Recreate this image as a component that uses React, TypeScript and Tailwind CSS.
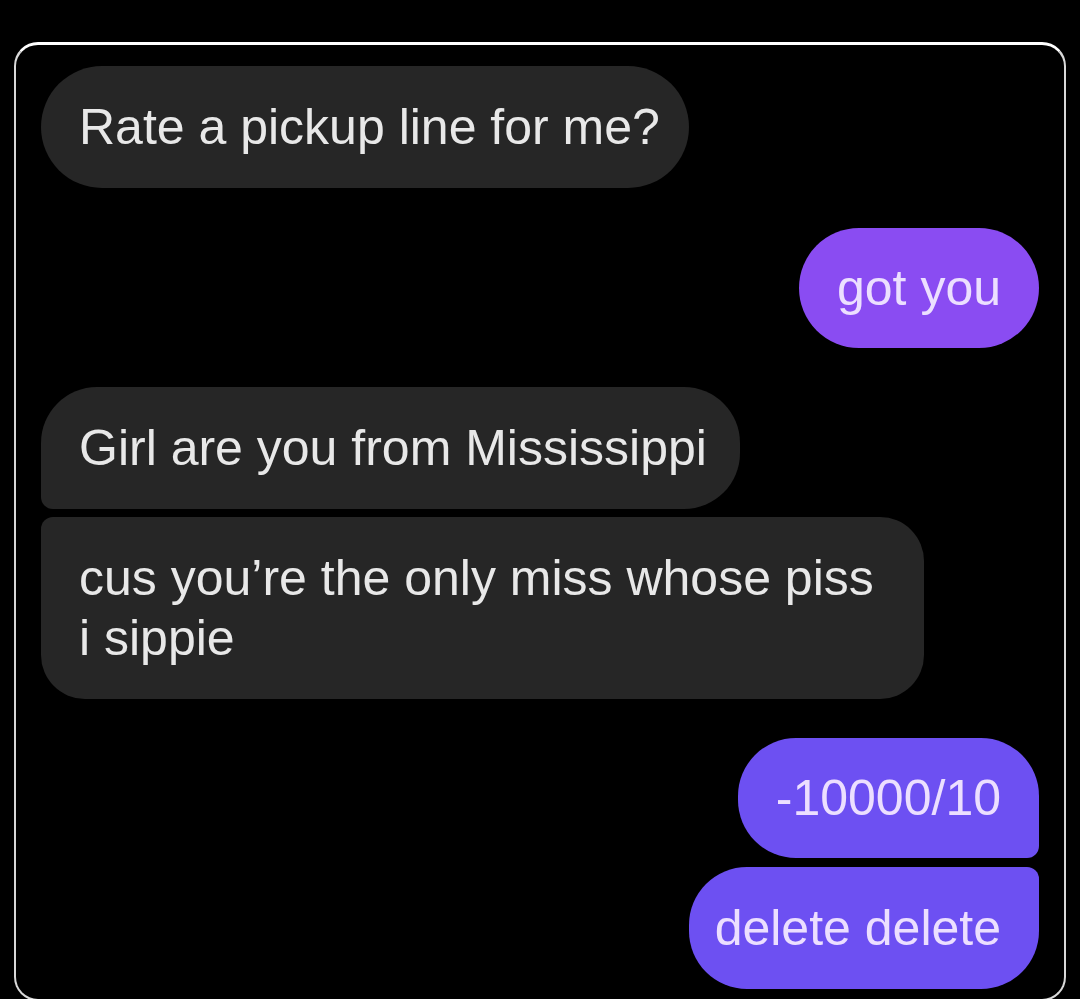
const font = { fontFamily: '"Liberation Sans", Arial, sans-serif' }

function Gray({ children, className = '' }: { children: React.ReactNode; className?: string }) {
  return (
    <div className={`w-fit bg-[#262626] text-[#e8e8e8] text-[50px] leading-[60px] pl-[38px] py-[31px] ${className}`}>
      {children}
    </div>
  )
}

function Purple({ children, className = '' }: { children: React.ReactNode; className?: string }) {
  return (
    <div className={`w-fit self-end text-[#ecdfff] text-[50px] leading-[60px] pr-[38px] py-[30px] ${className}`}>
      {children}
    </div>
  )
}

export default function App() {
  return (
    <div className="min-h-[999px] bg-black pt-[42px] px-[14px] overflow-hidden" style={font}>
      <div className="border-2 border-t-[3px] border-[#d9d9d9] border-t-white rounded-[24px] pt-[21px] px-[25px] pb-[10px] flex flex-col">
        <Gray className="rounded-full pr-[29px]">Rate a pickup line for me?</Gray>

        <Purple className="mt-[40px] rounded-full bg-[#8a4cf2] pl-[38px]">got you</Purple>

        <Gray className="mt-[39px] rounded-[56px] rounded-bl-[12px] pr-[33px]">Girl are you from Mississippi</Gray>
        <Gray className="mt-[8px] rounded-[44px] rounded-tl-[12px] pr-[50px]">
          cus you’re the only miss whose piss
          <br />
          i sippie
        </Gray>

        <Purple className="mt-[39px] rounded-[58px] rounded-br-[12px] bg-[#6d50f2] pl-[38px]">-10000/10</Purple>
        <Purple className="mt-[9px] rounded-[58px] rounded-tr-[12px] bg-[#6d50f2] pl-[26px] py-[31px]">delete delete</Purple>
      </div>
    </div>
  )
}
